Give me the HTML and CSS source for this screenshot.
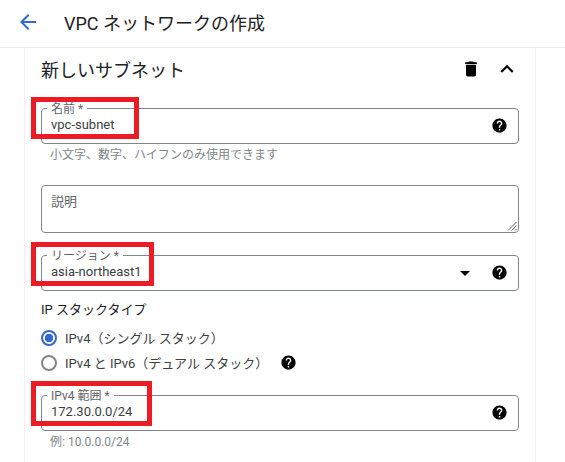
FILE: index.html
```html
<!DOCTYPE html>
<html lang="ja">
<head>
  <meta charset="UTF-8">
  <title>VPC ネットワークの作成</title>
  <link rel="stylesheet" href="styles.css">
</head>
<body>
  <header class="topbar">
    <svg class="back" viewBox="0 0 24 24" width="24" height="24"><path d="M20 11H7.830l5.590-5.590L12 4l-8 8 8 8 1.410-1.410L7.830 13H20z"/></svg>
    <h1>VPC ネットワークの作成</h1>
  </header>

  <main class="card">
    <div class="card-head">
      <h2>新しいサブネット</h2>
      <svg class="icon trash" viewBox="0 0 24 24" width="20" height="20"><path d="M6 19c0 1.100.9 2 2 2h8c1.100 0 2-.9 2-2V7H6v12zM19 4h-3.500l-1-1h-5l-1 1H5v2h14V4z"/></svg>
      <svg class="icon chevron" viewBox="0 0 24 24" width="26" height="26"><path d="M12 8l-6 6 1.410 1.410L12 10.830l4.590 4.580L18 14z"/></svg>
    </div>

    <div class="field">
      <span class="float-label">名前 *</span>
      <span class="value">vpc-subnet</span>
      <svg class="help" viewBox="0 0 24 24" width="17" height="17"><path d="M12 2C6.480 2 2 6.480 2 12s4.480 10 10 10 10-4.480 10-10S17.520 2 12 2zm1 17h-2v-2h2v2zm2.070-7.750l-.9.920C13.450 12.900 13 13.500 13 15h-2v-.5c0-1.100.45-2.100 1.170-2.830l1.240-1.260c.37-.36.590-.86.590-1.410 0-1.100-.9-2-2-2s-2 .9-2 2H8c0-2.210 1.790-4 4-4s4 1.790 4 4c0 .88-.36 1.680-.93 2.250z"/></svg>
      <span class="mark mark-name"></span>
    </div>
    <p class="hint">小文字、数字、ハイフンのみ使用できます</p>

    <div class="field field-area">
      <span class="placeholder">説明</span>
      <svg class="grip" viewBox="0 0 10 10" width="10" height="10"><path d="M1 9.500L9.500 1M4.500 9.500L9.500 4.500M8 9.500L9.500 8"/></svg>
    </div>

    <div class="field field-region">
      <span class="float-label">リージョン *</span>
      <span class="value">asia-northeast1</span>
      <span class="caret"></span>
      <svg class="help" viewBox="0 0 24 24" width="17" height="17"><path d="M12 2C6.480 2 2 6.480 2 12s4.480 10 10 10 10-4.480 10-10S17.520 2 12 2zm1 17h-2v-2h2v2zm2.070-7.750l-.9.920C13.450 12.900 13 13.500 13 15h-2v-.5c0-1.100.45-2.100 1.170-2.830l1.240-1.260c.37-.36.590-.86.590-1.410 0-1.100-.9-2-2-2s-2 .9-2 2H8c0-2.210 1.790-4 4-4s4 1.790 4 4c0 .88-.36 1.680-.93 2.250z"/></svg>
      <span class="mark mark-region"></span>
    </div>

    <div class="stack">
      <div class="stack-title">IP スタックタイプ</div>
      <div class="radio-row"><span class="radio radio-on"></span>IPv4（シングル スタック）</div>
      <div class="radio-row"><span class="radio"></span>IPv4 と IPv6（デュアル スタック）
        <svg class="help-inline" viewBox="0 0 24 24" width="17" height="17"><path d="M12 2C6.480 2 2 6.480 2 12s4.480 10 10 10 10-4.480 10-10S17.520 2 12 2zm1 17h-2v-2h2v2zm2.070-7.750l-.9.920C13.450 12.900 13 13.500 13 15h-2v-.5c0-1.100.45-2.100 1.170-2.830l1.240-1.260c.37-.36.590-.86.590-1.410 0-1.100-.9-2-2-2s-2 .9-2 2H8c0-2.210 1.790-4 4-4s4 1.790 4 4c0 .88-.36 1.680-.93 2.250z"/></svg>
      </div>
    </div>

    <div class="field field-range">
      <span class="float-label">IPv4 範囲 *</span>
      <span class="value">172.30.0.0/24</span>
      <svg class="help" viewBox="0 0 24 24" width="17" height="17"><path d="M12 2C6.480 2 2 6.480 2 12s4.480 10 10 10 10-4.480 10-10S17.520 2 12 2zm1 17h-2v-2h2v2zm2.070-7.750l-.9.920C13.450 12.900 13 13.500 13 15h-2v-.5c0-1.100.45-2.100 1.170-2.830l1.240-1.260c.37-.36.590-.86.590-1.410 0-1.100-.9-2-2-2s-2 .9-2 2H8c0-2.210 1.790-4 4-4s4 1.790 4 4c0 .88-.36 1.680-.93 2.250z"/></svg>
      <span class="mark mark-range"></span>
    </div>
    <p class="hint hint-range">例: 10.0.0.0/24</p>
  </main>
</body>
</html>
```

FILE: styles.css
```css
html, body {
  height: 100%;
}

body {
  margin: 0;
  overflow: hidden;
  background: #fff;
  color: #202124;
  font-family: Roboto, 'Noto Sans CJK JP', sans-serif;
  font-size: 13px;
}

.topbar {
  display: flex;
  align-items: center;
  height: 44px;
  padding: 0 0 3px 16px;
  border-bottom: 1px solid #e8eaed;
}

.back {
  fill: #3367d6;
}

.topbar h1 {
  margin: 0 0 0 24px;
  font-size: 18px;
  font-weight: 400;
}

.card {
  width: 478px;
  height: 414px;
  margin-left: 24px;
  padding: 0 16px;
  border-left: 1px solid #f6eef0;
  border-right: 1px solid #f6eef0;
}

.card-head {
  display: flex;
  align-items: center;
  height: 42px;
  margin-bottom: 18px;
}

.card-head h2 {
  flex: 1;
  margin: 0;
  font-size: 18px;
  font-weight: 400;
}

.icon {
  fill: #000;
}

.chevron {
  margin-left: 13px;
  margin-right: -1px;
}

.field {
  position: relative;
  display: flex;
  align-items: center;
  box-sizing: border-box;
  height: 36px;
  padding: 0 10px 2px 9px;
  border: 1px solid #80868b;
  border-radius: 4px;
}

.float-label {
  position: absolute;
  top: -7px;
  left: 5px;
  padding: 0 4px;
  background: #fff;
  color: #5f6368;
  font-size: 12px;
  line-height: 14px;
}

.value {
  flex: 1;
  color: #3c4043;
  font-size: 13px;
  line-height: 16px;
}

.help {
  fill: #000;
}

.hint {
  margin: 3px 0 0 9px;
  color: #80868b;
  font-size: 12px;
  line-height: 16px;
}

.field-area {
  align-items: flex-start;
  height: 48px;
  margin-top: 22px;
  padding-top: 8px;
}

.placeholder {
  color: #5f6368;
  font-size: 13px;
  line-height: 16px;
}

.grip {
  position: absolute;
  right: 1px;
  bottom: 1px;
  fill: none;
  stroke: #5f6368;
  stroke-width: 1;
}

.field-region {
  margin-top: 22px;
}

.caret {
  width: 0;
  height: 0;
  margin: 2px 21px 0 0;
  border-left: 5px solid transparent;
  border-right: 5px solid transparent;
  border-top: 5px solid #000;
}

.stack {
  margin-top: 10px;
  font-size: 13px;
}

.stack-title {
  height: 18px;
  margin-bottom: 6px;
  font-size: 13px;
  line-height: 18px;
}

.radio-row {
  display: flex;
  align-items: center;
  height: 25px;
  color: #3c4043;
}

.radio {
  box-sizing: border-box;
  width: 16px;
  height: 16px;
  margin-right: 8px;
  border: 2px solid #80868b;
  border-radius: 50%;
}

.radio-on {
  border-color: #3367d6;
  background: radial-gradient(circle, #3367d6 0, #3367d6 4px, #fff 4.500px);
}

.help-inline {
  margin-left: 12px;
  fill: #000;
}

.field-range {
  margin-top: 20px;
}

/* annotation boxes drawn on top of the screenshot */
.mark {
  position: absolute;
  left: -11px;
  box-sizing: border-box;
  border: 5px solid #ed1c24;
  pointer-events: none;
}

.mark-name {
  top: -12px;
  width: 108px;
  height: 42px;
}

.mark-region {
  top: -14px;
  width: 123px;
  height: 44px;
}

.mark-range {
  top: -15px;
  width: 121px;
  height: 45px;
}
```
